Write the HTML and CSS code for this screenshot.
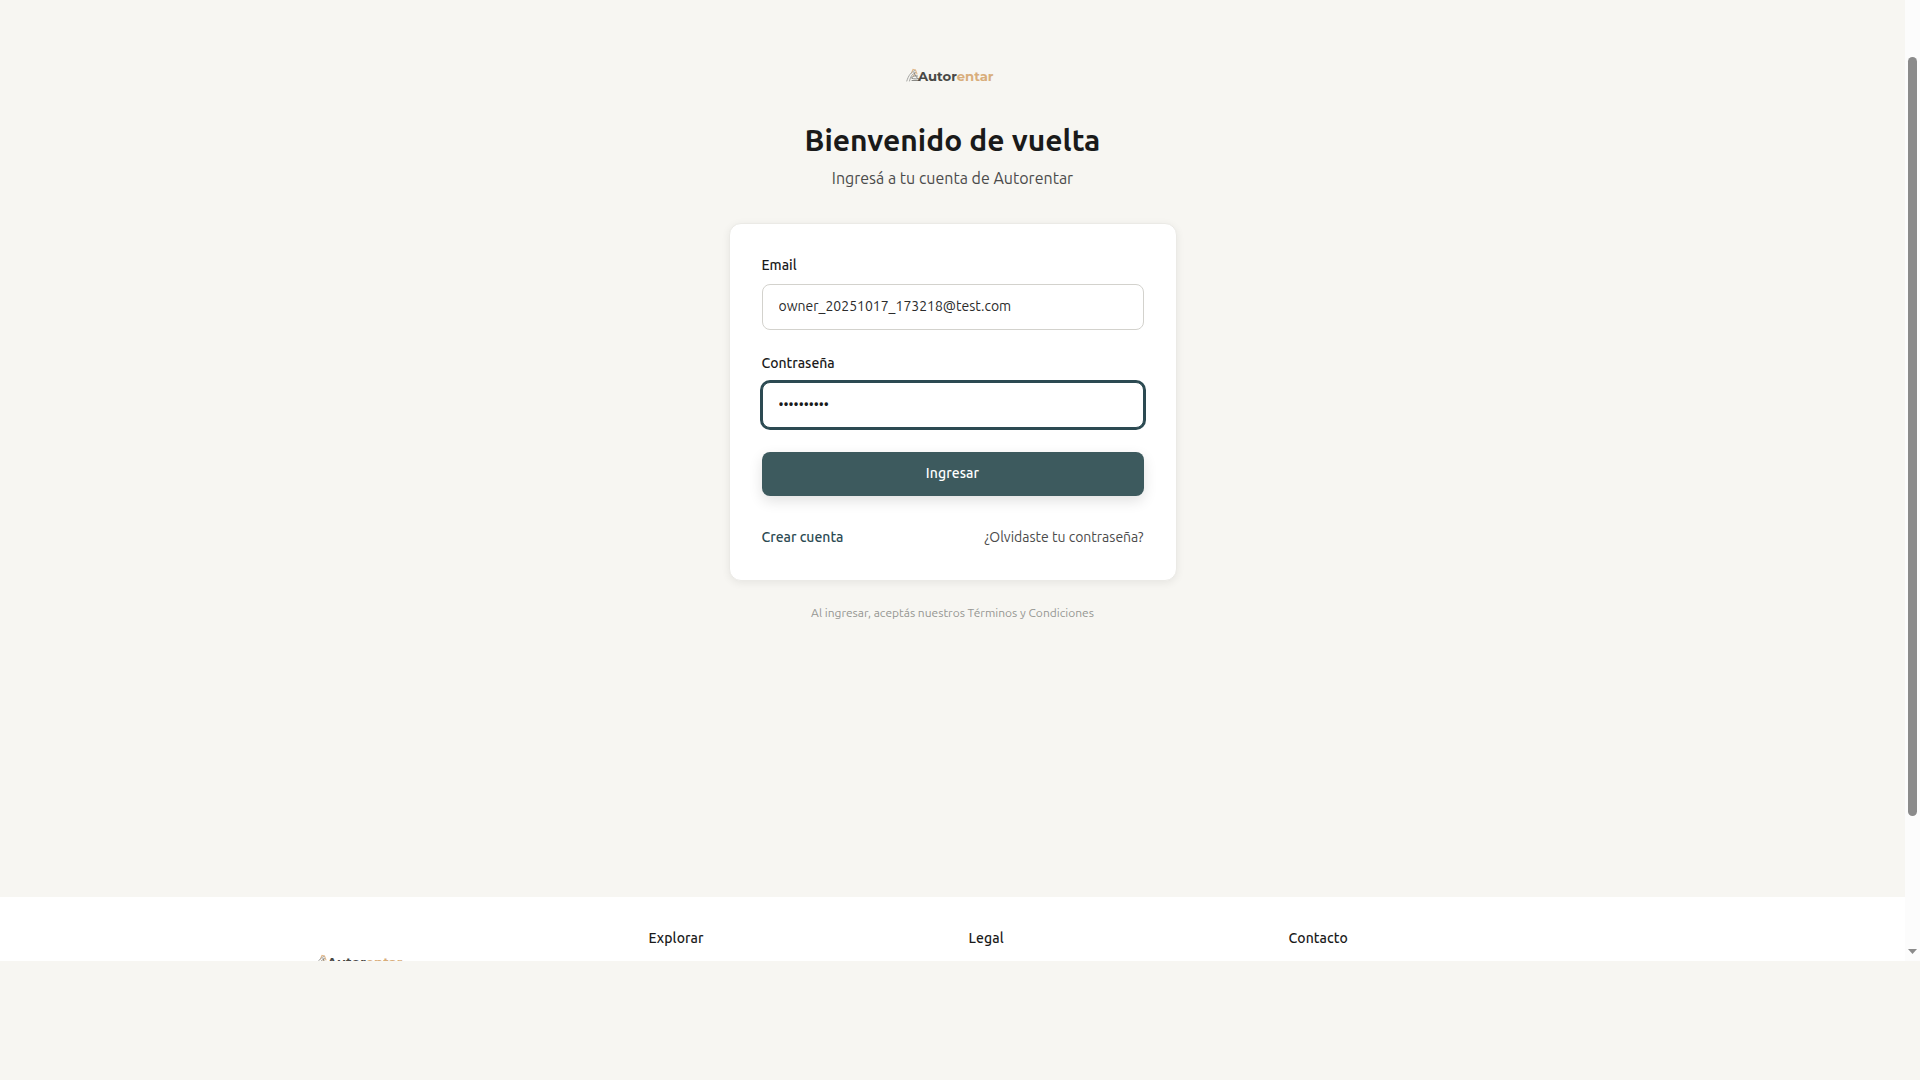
FILE: index.html
```
<!DOCTYPE html>
<html lang="es">
<head>
<meta charset="utf-8">
<title>Autorentar</title>
<link rel="stylesheet" href="styles.css">
</head>
<body>
<svg class="defs" aria-hidden="true">
  <symbol id="logo" viewBox="0 0 90 20">
    <g fill="none" stroke-linecap="round">
      <path d="M5.500 7 7 3.500l2.500.5 1.500 4M7 10.500l2-3" stroke="#e3b98b" stroke-width="1.100"/>
      <path d="M.8 15C2.500 9.500 5 6 9 4.500M3.500 15C4.500 10.500 6 8 9.500 6.500" stroke="#a3a3a0"/>
      <path d="M5.500 12c1-2 3-2.500 6-2M6 14.500h8M6 12.300c2 .8 4 .8 6.500.3M8 6.500c1.500 3.500 3 6 6 8" stroke="#8b8b88"/>
    </g>
    <text class="logo-text" x="12" y="14.800" textLength="75.500" lengthAdjust="spacingAndGlyphs">Autor<tspan class="logo-accent">entar</tspan></text>
  </symbol>
</svg>
<div class="window">
  <div class="page">
    <main class="main">
      <svg class="logo"><use href="#logo"/></svg>
      <h1 class="title">Bienvenido de vuelta</h1>
      <p class="subtitle">Ingresá a tu cuenta de Autorentar</p>
      <form class="card">
        <label class="label" for="email">Email</label>
        <input class="input" id="email" type="text" value="owner_20251017_173218@test.com">
        <label class="label" for="password">Contraseña</label>
        <input class="input input-focused" id="password" type="password" value="abcdefghij">
        <button class="button" type="button">Ingresar</button>
        <div class="links">
          <a class="link-primary">Crear cuenta</a>
          <a class="link">¿Olvidaste tu contraseña?</a>
        </div>
      </form>
      <p class="terms">Al ingresar, aceptás nuestros Términos y Condiciones</p>
    </main>
    <footer class="footer">
      <div class="footer-grid">
        <div><svg class="footer-logo"><use href="#logo"/></svg></div>
        <h2 class="footer-title">Explorar</h2>
        <h2 class="footer-title">Legal</h2>
        <h2 class="footer-title">Contacto</h2>
      </div>
    </footer>
  </div>
  <div class="scrollbar">
    <div class="thumb"></div>
    <svg class="arrow" viewBox="0 0 9 5"><path d="M0 0h9L4.500 5z" fill="#8b8b8b"/></svg>
  </div>
</div>
</body>
</html>
```
FILE: styles.css
```
* { box-sizing: border-box; margin: 0; }
body {
  height: 1080px;
  overflow: hidden;
  background: #f7f6f2;
  color: #1a1a1a;
  font: 14px/20px Ubuntu, "Open Sans", sans-serif;
}
.defs { display: block; width: 0; height: 0; }
.window { display: flex; height: 961px; overflow: hidden; }
.page { flex: 1; display: flex; flex-direction: column; }
.main {
  flex: 0 0 897px;
  display: flex;
  flex-direction: column;
  align-items: center;
  padding-top: 66px;
}
.logo { width: 90px; height: 20px; margin: 0 4px 36px 0; }
.logo-text {
  font: 700 13px Montserrat, Ubuntu, "Open Sans", sans-serif;
  fill: #484845;
}
.logo-accent { fill: #d9ae7c; }
.title { font-size: 30px; line-height: 36px; font-weight: 700; margin-bottom: 8px; }
.subtitle { font-size: 16px; line-height: 24px; color: #4b4b4b; margin-bottom: 33px; }
.card {
  width: 448px;
  height: 358px;
  padding: 32px;
  display: flex;
  flex-direction: column;
  background: #fff;
  border: 1px solid #ebeae6;
  border-radius: 12px;
  box-shadow: 0 2px 8px rgba(0, 0, 0, .07);
}
.label { font-weight: 500; margin: -1px 0 9px; }
.input {
  height: 46px;
  padding: 11px 16px 13px;
  margin-bottom: 24px;
  border: 1px solid #d3d2cd;
  border-radius: 8px;
  outline: none;
  background: #fff;
  color: #2b2b2b;
  font: inherit;
}
.input-focused {
  border-color: #2c4a52;
  box-shadow: 0 0 0 2px #2c4a52;
  color: #1a1a1a;
}
.button {
  height: 44px;
  padding-bottom: 3px;
  border: 0;
  border-radius: 8px;
  background: #3d5a5e;
  color: #fff;
  font: inherit;
  font-weight: 500;
  letter-spacing: .1px;
  box-shadow: 0 5px 14px rgba(0, 0, 0, .12);
}
.links { display: flex; justify-content: space-between; margin-top: 31px; }
.link-primary { color: #2c4a52; font-weight: 500; }
.link { color: #4b4b4b; }
.terms { margin-top: 24px; font-size: 12px; line-height: 16px; color: #969692; }
.footer { flex: 1; background: #fff; overflow: hidden; }
.footer-grid {
  width: 1248px;
  margin: 0 auto;
  padding-top: 31px;
  display: grid;
  grid-template-columns: repeat(4, 288px);
  column-gap: 32px;
}
.footer-title { font-size: 14px; line-height: 20px; font-weight: 500; letter-spacing: .1px; }
.footer-logo { display: block; width: 90px; height: 20px; margin: 24px 0 0 -14px; }
.scrollbar {
  width: 15px;
  background: #fcfcfc;
  display: flex;
  flex-direction: column;
  align-items: center;
  padding-top: 57px;
}
.thumb { width: 9px; height: 759px; border-radius: 5px; background: #8b8b8b; }
.arrow { width: 9px; height: 5px; margin-top: 133px; }
```
